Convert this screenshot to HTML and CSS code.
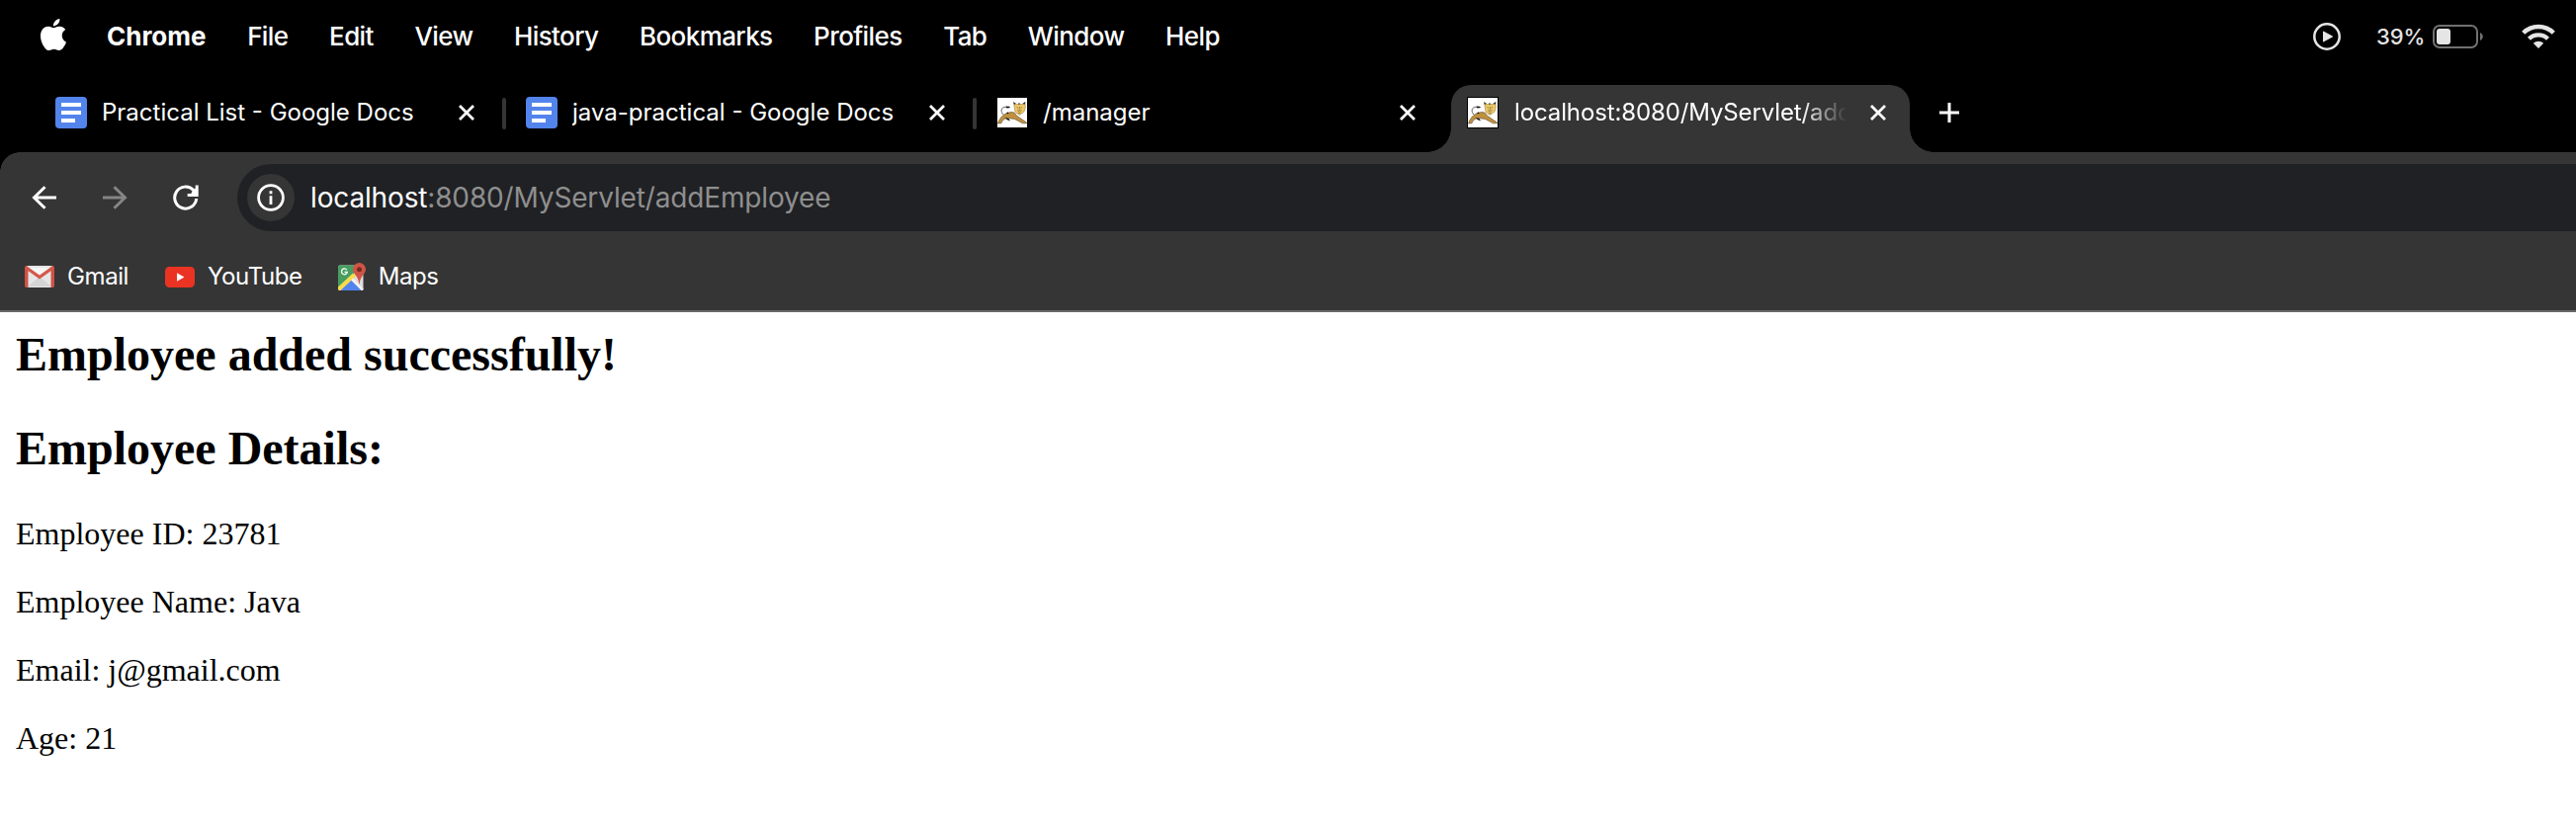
FILE: index.html
```html
<!DOCTYPE html>
<html lang="en">
<head>
<meta charset="utf-8">
<title>localhost:8080/MyServlet/addEmployee</title>
<link rel="stylesheet" href="styles.css">
</head>
<body>
<svg class="defs" width="0" height="0" aria-hidden="true">
  <symbol id="docs" viewBox="0 0 32 32">
    <rect width="32" height="32" rx="4" fill="#5384ec"/>
    <path d="M6 6h20v4H6zM6 14h20v4H6zM6 22h14v4H6z" fill="#fff"/>
  </symbol>
  <symbol id="close" viewBox="0 0 16 16">
    <path d="M1 1l14 14M15 1L1 15" stroke="#fff" stroke-width="2.8" fill="none"/>
  </symbol>
  <symbol id="tomcat" viewBox="0 0 30 30">
    <rect width="30" height="30" fill="#fff"/>
    <path d="M6.500 17.500C2.500 14 3.500 8.500 9.500 9.500" fill="none" stroke="#555" stroke-width=".9"/>
    <path d="M8.500 8.500l3.500.2 1 1.300-3.500.5z" fill="#111"/>
    <path d="M.500 26C2.500 20.500 6 16.500 10 15.500c3-1 5-1.500 7-.5l3 3.500 9.500 6.500v.8h-4l-8-4.300-6-.8c-4-.3-6 1.300-7.500 5z" fill="#c0903f" stroke="#5b4930" stroke-width=".6"/>
    <path d="M7.500 20.200l2.500 2 3 1.300-1.500-2.500zM9 15.500l1.200-1 1.600.7-1.300 1.100z" fill="#111"/>
    <path d="M16.500 5l3 1.500h5.500l3-2 .3 5.500-1.300 4-4.500 3.500-4.500-3z" fill="#edc766" stroke="#8a7240" stroke-width=".5"/>
    <path d="M16 4l2.800 1.900-1.700.8zM28.500 4l-3 2 2 .8zM21 5.500l1 1.800 1-1.800z" fill="#222"/>
    <path d="M19.500 9.500l1.500.7M25 9.500l-1.500.7M22.300 9v4M20 12.500l2.300 1.500 2.300-1.500M21 15.500h2.500" fill="none" stroke="#8d7238" stroke-width=".8"/>
  </symbol>
</svg>

<header class="menubar">
  <svg class="apple" viewBox="0 0 24 24"><path fill="#fff" d="M12.152 6.896c-.948 0-2.415-1.078-3.96-1.04-2.040.027-3.910 1.183-4.961 3.014-2.117 3.675-.546 9.103 1.519 12.090 1.013 1.454 2.208 3.090 3.792 3.039 1.520-.065 2.090-.987 3.935-.987 1.831 0 2.350.987 3.960.948 1.637-.026 2.676-1.480 3.676-2.948 1.156-1.688 1.636-3.325 1.662-3.415-.039-.013-3.182-1.221-3.220-4.857-.026-3.040 2.480-4.494 2.597-4.559-1.429-2.090-3.623-2.324-4.390-2.376-2-.156-3.675 1.090-4.610 1.090zM15.530 3.830c.843-1.012 1.400-2.427 1.245-3.830-1.207.052-2.662.805-3.532 1.818-.780.896-1.454 2.338-1.273 3.714 1.338.104 2.715-.688 3.559-1.701"/></svg>
  <nav class="menus">
    <span class="app-name">Chrome</span>
    <span>File</span>
    <span>Edit</span>
    <span>View</span>
    <span>History</span>
    <span>Bookmarks</span>
    <span>Profiles</span>
    <span>Tab</span>
    <span>Window</span>
    <span>Help</span>
  </nav>
  <div class="status">
    <svg class="play" viewBox="0 0 28 28"><circle cx="14" cy="14" r="12.700" fill="none" stroke="#e5e5e5" stroke-width="2.500"/><path d="M10.600 9.200v9.600l8.800-4.800z" fill="#e5e5e5" stroke="#e5e5e5" stroke-width="1.200" stroke-linejoin="round"/></svg>
    <span class="percent">39%</span>
    <svg class="battery" viewBox="0 0 51 24"><rect x="1" y="1" width="44" height="22" rx="6" fill="none" stroke="#717171" stroke-width="2"/><rect x="4" y="4" width="14" height="16" rx="3" fill="#e5e5e5"/><path d="M48 8v8c3.700-1.400 3.700-6.600 0-8z" fill="#717171"/></svg>
    <svg class="wifi" viewBox="0 0 34 25"><g fill="none" stroke="#e5e5e5" stroke-width="4.400"><path d="M1.700 9.200a21.800 21.800 0 0 1 30.600 0"/><path d="M7.500 15.200a13.600 13.600 0 0 1 19 0"/></g><path d="M17 25l-5.200-5.200a7.500 7.500 0 0 1 10.400 0z" fill="#e5e5e5"/></svg>
  </div>
</header>

<div class="tabstrip">
  <div class="tab">
    <svg class="favicon"><use href="#docs"/></svg>
    <span class="tab-title">Practical List - Google Docs</span>
    <svg class="close"><use href="#close"/></svg>
  </div>
  <div class="tab divided">
    <svg class="favicon"><use href="#docs"/></svg>
    <span class="tab-title">java-practical - Google Docs</span>
    <svg class="close"><use href="#close"/></svg>
  </div>
  <div class="tab divided">
    <svg class="favicon cat"><use href="#tomcat"/></svg>
    <span class="tab-title">/manager</span>
    <svg class="close"><use href="#close"/></svg>
  </div>
  <div class="tab active">
    <svg class="favicon cat"><use href="#tomcat"/></svg>
    <span class="tab-title">localhost:8080/MyServlet/addEmployee</span>
    <svg class="close"><use href="#close"/></svg>
  </div>
  <svg class="new-tab" viewBox="0 0 20 20"><path d="M10 0v20M0 10h20" stroke="#fff" stroke-width="3"/></svg>
</div>

<div class="chrome">
  <div class="toolbar">
    <svg class="nav back" viewBox="0 0 26 24"><path d="M25 12H3M13.500 1.200L2.500 12l11 10.800" fill="none" stroke="#fff" stroke-width="3"/></svg>
    <svg class="nav forward" viewBox="0 0 26 24"><path d="M1 12h22M12.500 1.200l11 10.800-11 10.800" fill="none" stroke="#868686" stroke-width="3"/></svg>
    <svg class="nav reload" viewBox="0 0 26 26"><path d="M23.700 14A11 11 0 1 1 20.800 5.600" fill="none" stroke="#fff" stroke-width="3"/><path d="M24.200.500v10H14.700" fill="none" stroke="#fff" stroke-width="3"/><path d="M20 5l4-2v7h-6z" fill="#fff"/></svg>
    <div class="omnibox">
      <span class="info"><svg viewBox="0 0 28 28"><circle cx="14" cy="14" r="12.400" fill="none" stroke="#fff" stroke-width="2.800"/><path d="M14 12.300v8.700M14 7.200v3" stroke="#fff" stroke-width="2.800"/></svg></span>
      <span class="url"><b>localhost</b>:8080/MyServlet/addEmployee</span>
    </div>
  </div>
  <div class="bookmarks">
    <a class="bookmark"><svg class="gmail" viewBox="0 0 30 22"><rect x="1" width="28" height="22" rx="1.500" fill="#e6e6e6"/><path d="M3 21l12-10 12 10z" fill="#d5d5d5"/><path d="M4 2l11 9L26 2z" fill="#f5f5f5"/><path d="M0 2Q0 0 2 0l1.500 2v20H1.500Q0 22 0 20zM30 2q0-2-2-2l-1.500 2v20h2q1.500 0 1.500-2z" fill="#cf5245"/><path d="M1 1.500L15 11.500 29 1.500" fill="none" stroke="#d3584b" stroke-width="3.300"/></svg><span>Gmail</span></a>
    <a class="bookmark"><svg class="youtube" viewBox="0 0 30 21"><rect width="30" height="21" rx="4.500" fill="#ea3323"/><path d="M12 6.300v8.400l7.500-4.200z" fill="#fff"/></svg><span>YouTube</span></a>
    <a class="bookmark"><svg class="maps" viewBox="0 0 28 28"><path d="M2 2.500h20L25.500 10v16.500q0 1.500-1.500 1.500H2Q0 28 0 26V4.500q0-2 2-2z" fill="#dedede"/><path d="M2 2.500h18l-5 11L0 27V4.500q0-2 2-2z" fill="#479e5f"/><path d="M1.500 28L13 17l11 11z" fill="#5384ec"/><path d="M0 24.500L15 10.500l3 3L2.500 28H1.500Q0 28 0 26z" fill="#f9db4c"/><path d="M14 16.500l11 11" stroke="#f2f2f2" stroke-width="2.500"/><path d="M21.500 0a6.500 6.500 0 0 1 6.500 6.500c0 5-5.500 6.500-6.300 15h-.4C20.500 13 15 11.500 15 6.500A6.500 6.500 0 0 1 21.500 0z" fill="#cf5547"/><circle cx="21.500" cy="6.700" r="2.500" fill="#732b22"/><path d="M8.800 7.200A2.900 2.900 0 1 0 9.300 9.300H6.500" fill="none" stroke="#fff" stroke-width="1.300"/></svg><span>Maps</span></a>
  </div>
</div>

<main class="page">
  <h2>Employee added successfully!</h2>
  <h2>Employee Details:</h2>
  <p>Employee ID: 23781</p>
  <p>Employee Name: Java</p>
  <p>Email: j@gmail.com</p>
  <p>Age: 21</p>
</main>
</body>
</html>
```
FILE: styles.css
```css
* { box-sizing: border-box; }

body {
  margin: 0;
  height: 828px;
  overflow: hidden;
  display: flex;
  flex-direction: column;
  background: #fff;
  color: #fff;
  font-family: Inter, "Liberation Sans", sans-serif;
}

svg { display: block; flex: none; }
.defs { position: absolute; }

/* System menu bar */
.menubar {
  display: flex;
  align-items: center;
  height: 86px;
  padding: 0 21px 13px 38px;
  background: #000;
}
.apple { width: 32px; height: 32px; margin-bottom: 4px; }
.menus {
  display: flex;
  gap: 41.6px;
  margin-left: 38px;
  font-size: 26px;
  font-weight: 500;
  letter-spacing: -0.6px;
  white-space: nowrap;
}
.app-name { font-weight: 700; letter-spacing: 0; }
.status {
  display: flex;
  align-items: center;
  margin-left: auto;
  color: #e5e5e5;
}
.play { width: 28px; height: 28px; }
.percent {
  width: 57px;
  margin-left: 36px;
  font-size: 22px;
  font-weight: 500;
  letter-spacing: -0.1px;
}
.battery { width: 51px; height: 24px; }
.wifi { width: 34px; height: 25px; margin-left: 39px; }

/* Tabs */
.tabstrip {
  display: flex;
  height: 68px;
  padding-left: 40px;
  background: #000;
}
.tab {
  position: relative;
  display: flex;
  align-items: center;
  width: 476px;
  height: 68px;
  padding: 0 36px 12px 16px;
}
.favicon { width: 32px; height: 32px; }
.favicon.cat { width: 30px; height: 30px; margin: 0 1px; }
.tab-title {
  flex: 1;
  margin: 0 13px 0 15px;
  overflow: hidden;
  font-size: 24px;
  line-height: 30px;
  white-space: nowrap;
}
.close { width: 16px; height: 16px; }
.tab.divided::before {
  content: "";
  position: absolute;
  left: -8px;
  top: 13px;
  width: 4px;
  height: 32px;
  border-radius: 2px;
  background: #353535;
}
.tab.active {
  width: 464px;
  padding-right: 24px;
  border-radius: 20px 20px 0 0;
  background: #353535;
}
.tab.active .favicon {
  width: 32px;
  height: 32px;
  margin: 0;
  border: 1px solid #000;
}
.tab.active .tab-title {
  margin-left: 16px;
  margin-right: 24px;
  letter-spacing: -0.12px;
  -webkit-mask-image: linear-gradient(to right, #000 calc(100% - 46px), transparent);
  mask-image: linear-gradient(to right, #000 calc(100% - 46px), transparent);
}
.tab.active::before,
.tab.active::after {
  content: "";
  position: absolute;
  bottom: 0;
  width: 24px;
  height: 24px;
}
.tab.active::before {
  left: -24px;
  background: radial-gradient(circle at 0 0, transparent 23.5px, #353535 24px);
}
.tab.active::after {
  right: -24px;
  background: radial-gradient(circle at 100% 0, transparent 23.5px, #353535 24px);
}
.new-tab { width: 20px; height: 20px; margin: 18px 0 0 30px; }

/* Toolbar and bookmarks */
.chrome {
  height: 162px;
  border-bottom: 2px solid #686868;
  background: radial-gradient(circle at 20px 20px, #353535 19.5px, #000 20px) 0 0 / 20px 20px no-repeat, #353535;
}
.toolbar {
  display: flex;
  align-items: center;
  height: 92px;
  padding-left: 32px;
}
.back, .forward { width: 26px; height: 24px; }
.forward { margin-left: 45px; }
.reload { width: 26px; height: 26px; margin-left: 46px; }
.omnibox {
  display: flex;
  align-items: center;
  flex: 1;
  height: 68px;
  margin-left: 39px;
  padding-left: 10px;
  border-radius: 34px 0 0 34px;
  background: #202124;
}
.info {
  display: grid;
  place-items: center;
  width: 48px;
  height: 48px;
  border-radius: 50%;
  background: #353535;
}
.info svg { width: 28px; height: 28px; }
.url {
  margin-left: 16px;
  color: #8f8f8f;
  font-size: 28px;
  letter-spacing: -0.15px;
}
.url b { color: #fff; font-weight: 400; }
.bookmarks {
  display: flex;
  align-items: center;
  height: 68px;
  padding-left: 25px;
}
.bookmark {
  display: flex;
  align-items: center;
  font-size: 24px;
  letter-spacing: -0.4px;
}
.bookmark span { margin: -1px 0 0 13px; }
.gmail { width: 30px; height: 22px; }
.youtube { width: 30px; height: 21px; margin-left: 37px; }
.maps { width: 28px; height: 28px; margin-left: 36px; }

/* Servlet response */
.page {
  flex: 1;
  padding: 15px 16px;
  color: #000;
  font-family: "Liberation Serif", "Times New Roman", serif;
  font-size: 32px;
}
.page h2 { margin: 0 0 40px; font-size: 48px; line-height: 55px; }
.page h2 + p { margin-top: 41px; }
.page p { margin: 0 0 32px; line-height: 37px; }
```
